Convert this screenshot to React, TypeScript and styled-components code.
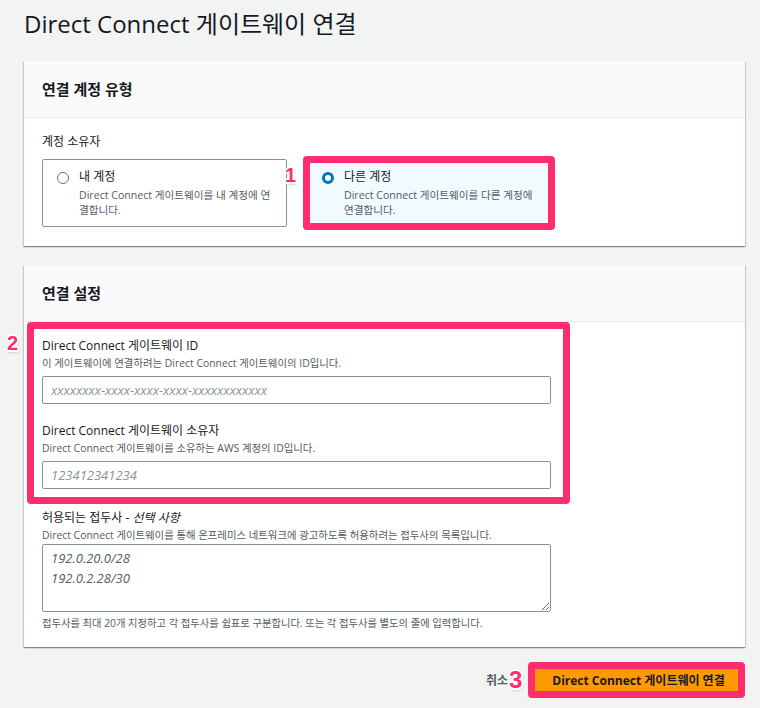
import React from "react";
import styled, { createGlobalStyle } from "styled-components";

const FONT = `"Open Sans", "Noto Sans CJK KR", "Noto Sans", sans-serif`;
const PINK = "#fe2d6e";

const Global = createGlobalStyle`
  html, body { margin: 0; padding: 0; background: #f2f3f3; }
  body { font-family: ${FONT}; color: #16191f; -webkit-font-smoothing: antialiased; }
  * { box-sizing: border-box; }
`;

const Page = styled.div`
  padding: 10px 15px 12px 24px;
  display: flex;
  flex-direction: column;
`;

const Title = styled.h1`
  margin: 0 0 23px;
  font-size: 24px;
  line-height: 28px;
  font-weight: 400;
  color: #16191f;
`;

const Panel = styled.section`
  background: #fff;
  box-shadow: 0 1px 1px 0 rgba(0, 28, 36, 0.3), 1px 1px 1px 0 rgba(0, 28, 36, 0.15),
    -1px 1px 1px 0 rgba(0, 28, 36, 0.15);
  margin-bottom: 19px;
`;

const PanelHeader = styled.header`
  background: #fafafa;
  border-bottom: 1px solid #eaeded;
  height: 57px;
  padding: 0 18px;
  display: flex;
  align-items: center;
`;

const PanelTitle = styled.h2`
  margin: 0;
  font-size: 15px;
  line-height: 20px;
  font-weight: 700;
  color: #16191f;
`;

const PanelBody = styled.div<{ $pt: number; $pb: number }>`
  padding: ${(p) => p.$pt}px 18px ${(p) => p.$pb}px;
  display: flex;
  flex-direction: column;
  align-items: flex-start;
`;

const SmallLabel = styled.div`
  font-size: 12px;
  line-height: 16px;
  color: #16191f;
  margin-bottom: 9px;
`;

const Cards = styled.div`
  display: grid;
  grid-template-columns: 245px 245px;
  gap: 20px;
`;

const Card = styled.label<{ $selected?: boolean }>`
  position: relative;
  height: 68px;
  border: 1px solid ${(p) => (p.$selected ? "#00a1c9" : "#879596")};
  border-radius: 2px;
  background: ${(p) => (p.$selected ? "#f1faff" : "#fff")};
  padding: 9px 10px 0 14px;
  display: grid;
  grid-template-columns: 12px 1fr;
  column-gap: 10px;
  align-items: start;
`;

const Radio = styled.span<{ $checked?: boolean }>`
  width: 12px;
  height: 12px;
  margin-top: 3px;
  border-radius: 50%;
  border: ${(p) => (p.$checked ? "3.5px solid #0073bb" : "1px solid #687078")};
  background: #fff;
`;

const CardText = styled.div`
  display: flex;
  flex-direction: column;
`;

const CardTitle = styled.span`
  font-size: 12px;
  line-height: 16px;
  color: #16191f;
`;

const CardDesc = styled.span<{ $maxw: number }>`
  font-size: 10.6px;
  line-height: 15px;
  color: #545b64;
  margin-top: 3px;
  max-width: ${(p) => p.$maxw}px;
  word-break: break-all;
`;

const Frame = styled.span<{ $t: number; $l: number; $r: number; $b: number }>`
  position: absolute;
  top: ${(p) => p.$t}px;
  left: ${(p) => p.$l}px;
  right: ${(p) => p.$r}px;
  bottom: ${(p) => p.$b}px;
  border: 7px solid ${PINK};
  border-radius: 4px;
  pointer-events: none;
`;

const Marker = styled.span<{ $size: number; $t: number; $l: number }>`
  position: absolute;
  top: ${(p) => p.$t}px;
  left: ${(p) => p.$l}px;
  font-family: "Liberation Sans", Arial, sans-serif;
  font-weight: 700;
  font-size: ${(p) => p.$size}px;
  line-height: 1;
  color: ${PINK};
  text-shadow: -1.5px -1.5px 0 #fff, 1.5px -1.5px 0 #fff, -1.5px 1.5px 0 #fff, 1.5px 1.5px 0 #fff,
    0 -2px 0 #fff, 0 2px 0 #fff, -2px 0 0 #fff, 2px 0 0 #fff, 1px 2px 3px rgba(0, 0, 0, 0.35);
  pointer-events: none;
`;

const Annotated = styled.div`
  position: relative;
  display: flex;
  flex-direction: column;
  gap: 18px;
`;

const Field = styled.div<{ $mt?: number }>`
  display: flex;
  flex-direction: column;
  width: 509px;
  margin-top: ${(p) => p.$mt ?? 0}px;
`;

const FieldLabel = styled.div`
  font-size: 12px;
  line-height: 18px;
  color: #16191f;
`;

const Optional = styled.i`
  font-style: italic;
`;

const FieldDesc = styled.div`
  font-size: 10.4px;
  line-height: 16px;
  color: #545b64;
  white-space: nowrap;
`;

const Input = styled.input`
  margin-top: 5px;
  height: 28px;
  width: 100%;
  border: 1px solid #879596;
  border-radius: 2px;
  padding: 0 8px;
  font-family: ${FONT};
  font-size: 13px;
  outline: none;
  &::placeholder {
    color: #879596;
    font-style: italic;
  }
`;

const TextArea = styled.textarea`
  margin-top: 1px;
  height: 68px;
  width: 100%;
  border: 1px solid #879596;
  border-radius: 2px;
  padding: 3px 8px;
  font-family: ${FONT};
  font-size: 13px;
  line-height: 20px;
  font-style: italic;
  color: #545b64;
  resize: vertical;
  outline: none;
  display: block;
`;

const Hint = styled.div`
  margin-top: 3px;
  font-size: 10.3px;
  line-height: 16px;
  color: #545b64;
  white-space: nowrap;
`;

const Footer = styled.div`
  display: flex;
  justify-content: flex-end;
  align-items: center;
  gap: 24px;
  margin-top: -1px;
`;

const LinkButton = styled.button`
  position: relative;
  border: none;
  background: none;
  padding: 0;
  font-family: ${FONT};
  font-size: 12px;
  font-weight: 700;
  color: #545b64;
  cursor: pointer;
`;

const PrimaryButton = styled.button`
  position: relative;
  width: 213px;
  height: 30px;
  border: 1px solid #ec7211;
  border-radius: 2px;
  background: #ff9900;
  font-family: ${FONT};
  font-size: 12px;
  font-weight: 700;
  color: #16191f;
  cursor: pointer;
`;

export default function App() {
  return (
    <>
      <Global />
      <Page>
        <Title>Direct Connect 게이트웨이 연결</Title>

        <Panel>
          <PanelHeader>
            <PanelTitle>연결 계정 유형</PanelTitle>
          </PanelHeader>
          <PanelBody $pt={16} $pb={19}>
            <SmallLabel>계정 소유자</SmallLabel>
            <Cards>
              <Card>
                <Radio />
                <CardText>
                  <CardTitle>내 계정</CardTitle>
                  <CardDesc $maxw={192}>Direct Connect 게이트웨이를 내 계정에 연결합니다.</CardDesc>
                </CardText>
              </Card>
              <Card $selected>
                <Radio $checked />
                <CardText>
                  <CardTitle>다른 계정</CardTitle>
                  <CardDesc $maxw={192}>Direct Connect 게이트웨이를 다른 계정에 연결합니다.</CardDesc>
                </CardText>
                <Frame $t={-4} $l={-5} $r={-4} $b={-4} />
                <Marker $size={20} $t={5} $l={-23}>1</Marker>
              </Card>
            </Cards>
          </PanelBody>
        </Panel>

        <Panel>
          <PanelHeader>
            <PanelTitle>연결 설정</PanelTitle>
          </PanelHeader>
          <PanelBody $pt={15} $pb={16}>
            <Annotated>
              <Frame $t={-15} $l={-15} $r={-19} $b={-15} />
              <Marker $size={20} $t={-4} $l={-35}>2</Marker>
              <Field>
                <FieldLabel>Direct Connect 게이트웨이 ID</FieldLabel>
                <FieldDesc>이 게이트웨이에 연결하려는 Direct Connect 게이트웨이의 ID입니다.</FieldDesc>
                <Input placeholder="xxxxxxxx-xxxx-xxxx-xxxx-xxxxxxxxxxxx" />
              </Field>
              <Field>
                <FieldLabel>Direct Connect 게이트웨이 소유자</FieldLabel>
                <FieldDesc>Direct Connect 게이트웨이를 소유하는 AWS 계정의 ID입니다.</FieldDesc>
                <Input placeholder="123412341234" />
              </Field>
            </Annotated>
            <Field $mt={20}>
              <FieldLabel>
                허용되는 접두사 - <Optional>선택 사항</Optional>
              </FieldLabel>
              <FieldDesc>
                Direct Connect 게이트웨이를 통해 온프레미스 네트워크에 광고하도록 허용하려는 접두사의 목록입니다.
              </FieldDesc>
              <TextArea defaultValue={"192.0.20.0/28\n192.0.2.28/30"} />
              <Hint>
                접두사를 최대 20개 지정하고 각 접두사를 쉼표로 구분합니다. 또는 각 접두사를 별도의 줄에 입력합니다.
              </Hint>
            </Field>
          </PanelBody>
        </Panel>

        <Footer>
          <LinkButton>취소</LinkButton>
          <PrimaryButton>
            Direct Connect 게이트웨이 연결
            <Frame $t={-4} $l={-5} $r={-1} $b={-4} />
            <Marker $size={24} $t={2} $l={-24}>3</Marker>
          </PrimaryButton>
        </Footer>
      </Page>
    </>
  );
}
